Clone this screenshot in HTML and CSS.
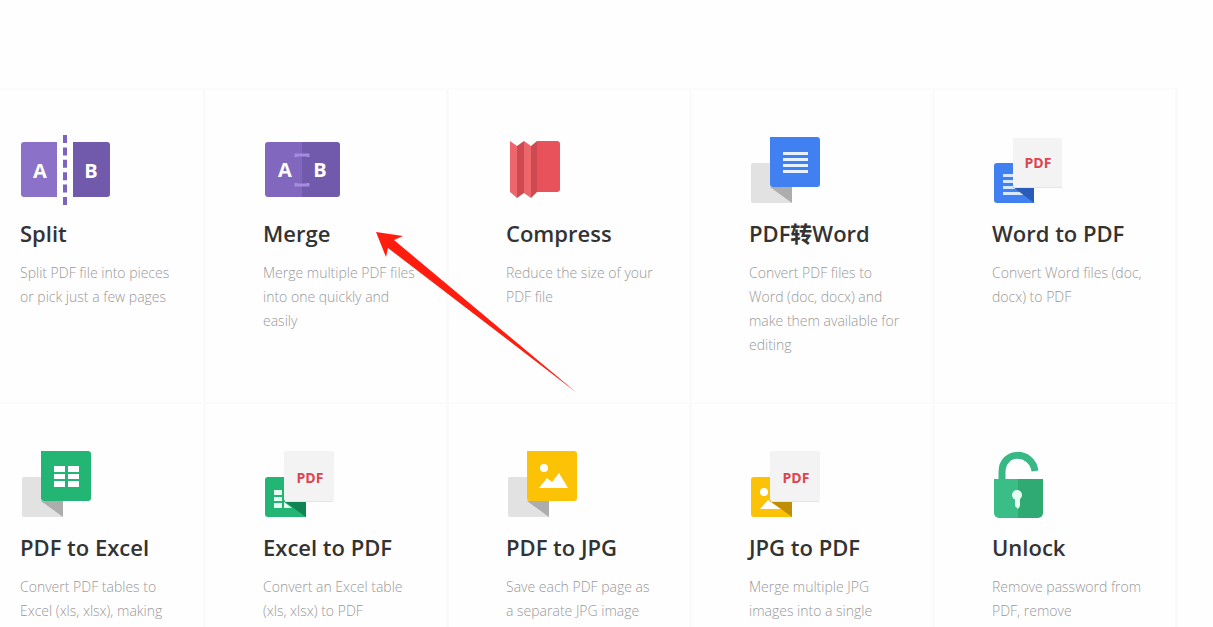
FILE: index.html
```html
<!DOCTYPE html>
<html lang="en">
<head>
  <meta charset="UTF-8">
  <meta name="viewport" content="width=device-width, initial-scale=1.0">
  <title>PDF Tools</title>
  <link rel="stylesheet" href="styles.css">
</head>
<body>

  <main class="page">
    <div class="tools">

      <!-- Split -->
      <a class="tool" href="#split">
        <svg class="icon" viewBox="0 0 92 72" aria-hidden="true">
          <path fill="#8b72c8" d="M4 8h33v55H4a3 3 0 0 1-3-3V11a3 3 0 0 1 3-3z"/>
          <path fill="#7159ab" d="M53 8h34a3 3 0 0 1 3 3v49a3 3 0 0 1-3 3H53z"/>
          <path stroke="#7d63bd" stroke-width="4" stroke-dasharray="8 4.4" d="M45 1v70"/>
          <text class="letter" x="20" y="44">A</text>
          <text class="letter" x="71" y="44">B</text>
        </svg>
        <h3>Split</h3>
        <p>Split PDF file into pieces or pick just a few pages</p>
      </a>

      <!-- Merge -->
      <a class="tool" href="#merge">
        <svg class="icon" viewBox="0 0 92 72" aria-hidden="true">
          <path fill="#8168be" d="M5 8h34v55H5a3 3 0 0 1-3-3V11a3 3 0 0 1 3-3z"/>
          <path fill="#7159ab" d="M39 8h35a3 3 0 0 1 3 3v49a3 3 0 0 1-3 3H39z"/>
          <path fill="none" stroke="#a78be0" stroke-width="3" d="M33 23v-2h12v2M33 49v2h12v-2"/>
          <text class="letter" x="22" y="43">A</text>
          <text class="letter" x="57" y="43">B</text>
        </svg>
        <h3>Merge</h3>
        <p>Merge multiple PDF files into one quickly and easily</p>
        <!-- pointer -->
        <svg class="arrow" viewBox="0 0 202 162" aria-hidden="true">
          <path fill="#ff1d0f" d="M0 0L27 4 18 8 201 161 12 16 10 25z"/>
        </svg>
      </a>

      <!-- Compress -->
      <a class="tool" href="#compress">
        <svg class="icon" viewBox="0 0 92 72" aria-hidden="true">
          <path fill="#e8525a" d="M31 7h20a3 3 0 0 1 3 3v45a3 3 0 0 1-3 3H31z"/>
          <path fill="#ed666c" d="M4 7l7 5v52l-7-6zM18 7l7 5v52l-7-5z"/>
          <path fill="#cd4a51" d="M11 12l7-5v52l-7 5zM25 12l6-5v51l-6 6z"/>
        </svg>
        <h3>Compress</h3>
        <p>Reduce the size of your PDF file</p>
      </a>

      <!-- PDF to Word -->
      <a class="tool" href="#pdf-to-word">
        <svg class="icon" viewBox="0 0 92 72" aria-hidden="true">
          <path fill="#e2e2e2" d="M4 29h39v40H4a2 2 0 0 1-2-2V31a2 2 0 0 1 2-2z"/>
          <path fill="#adadad" d="M21 53h22v16z"/>
          <path fill="#4080f0" d="M21 3h47a3 3 0 0 1 3 3v44a3 3 0 0 1-3 3H24a3 3 0 0 1-3-3z"/>
          <path fill="#e6f2ff" d="M34 18h25v3H34zM34 24h25v3H34zM34 30h25v3H34zM34 36h25v3H34z"/>
        </svg>
        <h3>PDF转Word</h3>
        <p>Convert PDF files to Word (doc, docx) and make them available for editing</p>
      </a>

      <!-- Word to PDF -->
      <a class="tool" href="#word-to-pdf">
        <svg class="icon" viewBox="0 0 92 72" aria-hidden="true">
          <path fill="#4080f0" d="M5 29h37v40H5a3 3 0 0 1-3-3V32a3 3 0 0 1 3-3z"/>
          <path fill="#d5e8ff" d="M11 40h12v3H11zM11 46h12v3H11zM11 52h12v3H11zM11 58h20v3H11z"/>
          <path fill="#2b5bb9" d="M21 53h21v16z"/>
          <path fill="#e4e4e4" d="M22 52h48v2H22z"/>
          <rect x="21" y="4" width="49" height="49" rx="2" fill="#f3f3f3"/>
          <text class="label" x="46" y="34">PDF</text>
        </svg>
        <h3>Word to PDF</h3>
        <p>Convert Word files (doc, docx) to PDF</p>
      </a>

      <!-- PDF to Excel -->
      <a class="tool" href="#pdf-to-excel">
        <svg class="icon" viewBox="0 0 92 72" aria-hidden="true">
          <path fill="#e2e2e2" d="M4 29h39v40H4a2 2 0 0 1-2-2V31a2 2 0 0 1 2-2z"/>
          <path fill="#adadad" d="M21 53h22v16z"/>
          <path fill="#22b573" d="M21 3h47a3 3 0 0 1 3 3v44a3 3 0 0 1-3 3H24a3 3 0 0 1-3-3z"/>
          <path fill="#fff" d="M34 18h11v6H34zM48 18h11v6H48zM34 26h11v5H34zM48 26h11v5H48zM34 33h11v6H34zM48 33h11v6H48z"/>
        </svg>
        <h3>PDF to Excel</h3>
        <p>Convert PDF tables to Excel (xls, xlsx), making</p>
      </a>

      <!-- Excel to PDF -->
      <a class="tool" href="#excel-to-pdf">
        <svg class="icon" viewBox="0 0 92 72" aria-hidden="true">
          <path fill="#22b573" d="M5 29h38v40H5a3 3 0 0 1-3-3V32a3 3 0 0 1 3-3z"/>
          <path fill="#e6fff2" d="M11 42h8v5h-8zM11 49h8v4h-8zM11 55h8v5h-8zM21 54l8 6h-8z"/>
          <path fill="#128453" d="M21 53h22v16z"/>
          <path fill="#e4e4e4" d="M22 52h48v2H22z"/>
          <rect x="21" y="3" width="50" height="50" rx="2" fill="#f3f3f3"/>
          <text class="label" x="47" y="35">PDF</text>
        </svg>
        <h3>Excel to PDF</h3>
        <p>Convert an Excel table (xls, xlsx) to PDF</p>
      </a>

      <!-- PDF to JPG -->
      <a class="tool" href="#pdf-to-jpg">
        <svg class="icon" viewBox="0 0 92 72" aria-hidden="true">
          <path fill="#e2e2e2" d="M4 29h39v40H4a2 2 0 0 1-2-2V31a2 2 0 0 1 2-2z"/>
          <path fill="#adadad" d="M21 53h22v16z"/>
          <path fill="#fcc206" d="M21 3h47a3 3 0 0 1 3 3v44a3 3 0 0 1-3 3H24a3 3 0 0 1-3-3z"/>
          <circle cx="38" cy="20" r="4" fill="#fff"/>
          <path fill="#fff" d="M33 40l8-10 5 4 7-9 9 15z"/>
        </svg>
        <h3>PDF to JPG</h3>
        <p>Save each PDF page as a separate JPG image</p>
      </a>

      <!-- JPG to PDF -->
      <a class="tool" href="#jpg-to-pdf">
        <svg class="icon" viewBox="0 0 92 72" aria-hidden="true">
          <path fill="#fcc206" d="M5 29h38v40H5a3 3 0 0 1-3-3V32a3 3 0 0 1 3-3z"/>
          <circle cx="15" cy="44" r="4" fill="#fff"/>
          <path fill="#fff" d="M11 61l8-9 13 9z"/>
          <path fill="#c08e04" d="M21 53h22v16z"/>
          <path fill="#e4e4e4" d="M22 52h48v2H22z"/>
          <rect x="21" y="3" width="50" height="50" rx="2" fill="#f3f3f3"/>
          <text class="label" x="47" y="35">PDF</text>
        </svg>
        <h3>JPG to PDF</h3>
        <p>Merge multiple JPG images into a single</p>
      </a>

      <!-- Unlock -->
      <a class="tool" href="#unlock">
        <svg class="icon" viewBox="0 0 92 72" aria-hidden="true">
          <path fill="none" stroke="#37b884" stroke-width="7" d="M10 32V24C10 2 40 2 43 23"/>
          <path fill="#3bbd88" d="M2 31h24v39H7a5 5 0 0 1-5-5z"/>
          <path fill="#2faa72" d="M26 31h25v34a5 5 0 0 1-5 5H26z"/>
          <circle cx="25" cy="47" r="5" fill="#e6fff2"/>
          <path fill="#e6fff2" d="M23 49h5v9l-2 3-3-3z"/>
        </svg>
        <h3>Unlock</h3>
        <p>Remove password from PDF, remove</p>
      </a>

    </div>
  </main>

</body>
</html>
```
FILE: styles.css
```css
* {
  box-sizing: border-box;
}

body {
  margin: 0;
  background-color: #fefefe;
  font-family: "Open Sans", "Noto Sans CJK SC", sans-serif;
}

/* only the first screen of the list is shown */
.page {
  height: 100vh;
  overflow: hidden;
  padding-top: 88px;
}

.tools {
  display: grid;
  grid-template-columns: repeat(5, 1fr);
  grid-auto-rows: minmax(314px, auto);
  margin: 0 35px 0 -37px;
  border-top: 2px solid #fbfbfb;
}

.tool {
  position: relative;
  padding: 44px 30px 0 57px;
  border-right: 3px solid #fafafa;
  border-bottom: 2px solid #fbfbfb;
  color: #333;
  text-decoration: none;
}

.icon {
  display: block;
  width: 92px;
  height: 72px;
}

.letter {
  fill: #fff;
  font-size: 20px;
  font-weight: 700;
  text-anchor: middle;
}

.label {
  fill: #dc4550;
  font-size: 14px;
  font-weight: 700;
  text-anchor: middle;
}

.tool h3 {
  margin: 11px 0 12px;
  font-size: 22px;
  line-height: 32px;
  font-weight: 600;
  white-space: nowrap;
}

.tool p {
  margin: 0;
  font-size: 14px;
  line-height: 24px;
  font-weight: 300;
  color: #999;
}

/* red pointer over the cards */
.arrow {
  position: absolute;
  z-index: 1;
  top: 142px;
  left: 170px;
  width: 202px;
  height: 162px;
}
```
